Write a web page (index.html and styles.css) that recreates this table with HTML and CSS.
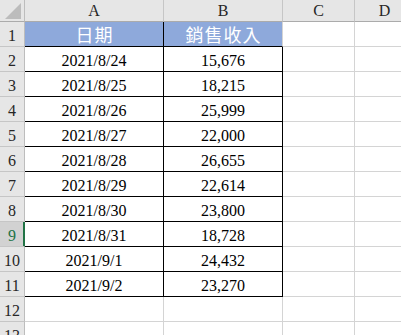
FILE: index.html
```html
<!DOCTYPE html>
<html lang="zh-Hant">
<head>
<meta charset="utf-8">
<link rel="stylesheet" href="styles.css">
</head>
<body>
<div class="sheet">
  <div class="corner"><span class="tri"></span></div>
  <div class="colhead">A</div>
  <div class="colhead">B</div>
  <div class="colhead">C</div>
  <div class="colhead">D</div>

  <div class="rowhead">1</div>
  <div class="cell hdr bt br">日期</div>
  <div class="cell hdr bt">銷售收入</div>
  <div class="cell"></div>
  <div class="cell"></div>

  <div class="rowhead">2</div>
  <div class="cell bt br">2021/8/24</div>
  <div class="cell bt br">15,676</div>
  <div class="cell"></div>
  <div class="cell"></div>

  <div class="rowhead">3</div>
  <div class="cell bt br">2021/8/25</div>
  <div class="cell bt br">18,215</div>
  <div class="cell"></div>
  <div class="cell"></div>

  <div class="rowhead">4</div>
  <div class="cell bt br">2021/8/26</div>
  <div class="cell bt br">25,999</div>
  <div class="cell"></div>
  <div class="cell"></div>

  <div class="rowhead">5</div>
  <div class="cell bt br">2021/8/27</div>
  <div class="cell bt br">22,000</div>
  <div class="cell"></div>
  <div class="cell"></div>

  <div class="rowhead">6</div>
  <div class="cell bt br">2021/8/28</div>
  <div class="cell bt br">26,655</div>
  <div class="cell"></div>
  <div class="cell"></div>

  <div class="rowhead">7</div>
  <div class="cell bt br">2021/8/29</div>
  <div class="cell bt br">22,614</div>
  <div class="cell"></div>
  <div class="cell"></div>

  <div class="rowhead">8</div>
  <div class="cell bt br">2021/8/30</div>
  <div class="cell bt br">23,800</div>
  <div class="cell"></div>
  <div class="cell"></div>

  <div class="rowhead active">9</div>
  <div class="cell bt br">2021/8/31</div>
  <div class="cell bt br">18,728</div>
  <div class="cell"></div>
  <div class="cell"></div>

  <div class="rowhead">10</div>
  <div class="cell bt br">2021/9/1</div>
  <div class="cell bt br">24,432</div>
  <div class="cell"></div>
  <div class="cell"></div>

  <div class="rowhead">11</div>
  <div class="cell bt br">2021/9/2</div>
  <div class="cell bt br">23,270</div>
  <div class="cell"></div>
  <div class="cell"></div>

  <div class="rowhead">12</div>
  <div class="cell"></div>
  <div class="cell"></div>
  <div class="cell"></div>
  <div class="cell"></div>

  <div class="rowhead">13</div>
  <div class="cell"></div>
  <div class="cell"></div>
  <div class="cell"></div>
  <div class="cell"></div>
</div>
</body>
</html>
```

FILE: styles.css
```css
html, body {
  margin: 0;
  padding: 0;
  background: #ffffff;
}

body {
  width: 401px;
  height: 335px;
  overflow: hidden;
  font-family: "Liberation Serif", "Noto Sans CJK TC", serif;
  font-size: 16px;
  color: #000000;
}

.sheet {
  display: grid;
  grid-template-columns: 25px 139px 119px 72px 60px;
  grid-template-rows: 22px repeat(13, 25px);
}

.corner {
  background: #e6e6e6;
  border-right: 1px solid #bdbdbd;
  border-bottom: 1px solid #ababab;
  position: relative;
}

.tri {
  position: absolute;
  left: 5px;
  top: 3px;
  width: 0;
  height: 0;
  border-left: 16px solid transparent;
  border-bottom: 16px solid #bcbcbc;
}

.colhead {
  background: #e6e6e6;
  border-right: 1px solid #c6c6c6;
  border-bottom: 1px solid #ababab;
  text-align: center;
  line-height: 20px;
  padding-top: 1px;
  color: #262626;
}

.rowhead {
  background: #e6e6e6;
  border-right: 1px solid #bdbdbd;
  border-bottom: 1px solid #c6c6c6;
  text-align: center;
  line-height: 20px;
  padding-top: 4px;
  color: #262626;
}

.rowhead.active {
  background: #d2d2d2;
  color: #217346;
  border-right: 1px solid #217346;
  box-shadow: inset -1px 0 0 #217346;
}

.cell {
  border-right: 1px solid #d4d4d4;
  border-bottom: 1px solid #d4d4d4;
  text-align: center;
  line-height: 20px;
  padding-top: 4px;
  white-space: nowrap;
}

.cell.bt {
  border-bottom-color: #000000;
}

.cell.br {
  border-right-color: #000000;
}

.hdr {
  background: #8ea9db;
  color: #ffffff;
  font-family: "Noto Sans CJK TC", sans-serif;
  font-size: 18px;
  letter-spacing: 1px;
  line-height: 22px;
  padding-top: 1px;
  padding-left: 1px;
}
```
